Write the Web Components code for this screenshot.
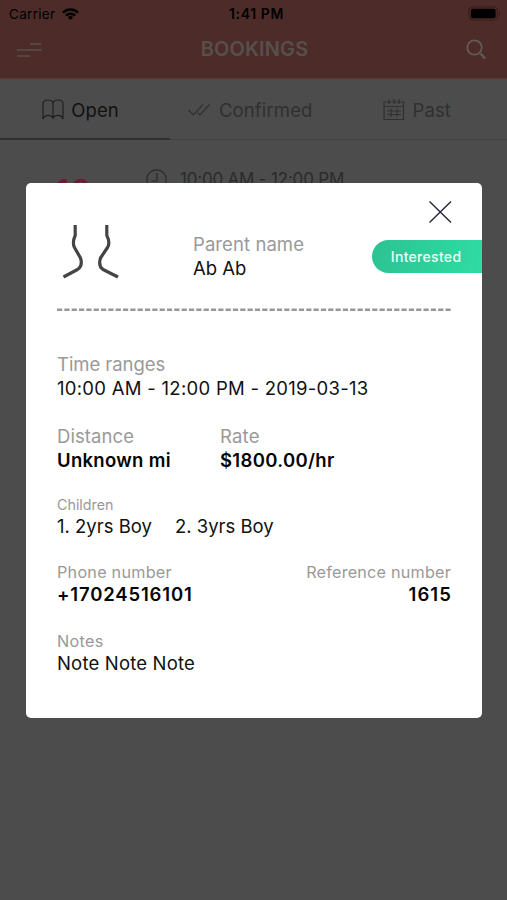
<!DOCTYPE html>
<html lang="en">
<head>
<meta charset="utf-8">
<title>Bookings</title>
<style>
html,body{margin:0;height:100%;overflow:hidden;background:#4c4c4c}
body{font-family:Inter,"Liberation Sans",sans-serif}
</style>
</head>
<body>
<booking-app></booking-app>
<script>
function define(name, html) {
  const t = document.createElement('template');
  t.innerHTML = html;
  customElements.define(name, class extends HTMLElement {
    constructor() {
      super();
      this.attachShadow({mode: 'open'}).append(t.content.cloneNode(true));
    }
  });
}

define('status-bar', `
<style>
:host{display:grid;grid-template-columns:1fr auto 1fr;align-items:center;height:28px;padding:0 6px 0 9px;font-size:13.5px;line-height:28px;color:#000}
.l{display:flex;align-items:center;gap:7px}
.l span{letter-spacing:.3px}
.c{font-weight:600;font-size:14px;letter-spacing:.6px;margin-left:3px}
.r{justify-self:end;margin-bottom:1px}
svg{display:block}
</style>
<div class="l"><span>Carrier</span>
<svg width="17" height="12" viewBox="0 0 17 12" style="margin-bottom:1px"><g fill="none" stroke="#000" stroke-width="2.4"><path d="M1 4.6a10.7 10.7 0 0 1 15 0"/><path d="M3.9 7.6a6.6 6.6 0 0 1 9.2 0"/></g><path d="M8.5 12 5.9 9.3a3.8 3.8 0 0 1 5.2 0z"/></svg></div>
<div class="c">1:41 PM</div>
<svg class="r" width="33" height="15" viewBox="0 0 33 15"><rect x="1" y="1" width="28.5" height="13" rx="4" fill="none" stroke="#3a1a1c" stroke-width="1.2"/><rect x="2.9" y="2.8" width="24.7" height="9.4" rx="2" fill="#000"/><path d="M31 5.2q2 2.3 0 4.6z" fill="#3a1a1c"/></svg>`);

define('nav-bar', `
<style>
:host{display:grid;grid-template-columns:1fr auto 1fr;align-items:center;height:50px;padding:0 20px 7px 17px;box-sizing:border-box;color:#56504d}
h1{margin:0 0 0 5px;font-size:20px;font-weight:600;letter-spacing:.12px;line-height:43px}
svg{display:block}
.search{justify-self:end;color:#625b58}
</style>
<svg class="menu" width="26" height="16" viewBox="0 0 26 16" stroke="currentColor" stroke-width="1.4"><path d="M13 2h11.500M0 8h25M0 14h13"/></svg>
<h1>BOOKINGS</h1>
<svg class="search" width="21" height="21" viewBox="0 0 21 21" fill="none" stroke="currentColor"><circle cx="8.500" cy="8.5" r="7.2" stroke-width="1.8"/><path d="m14.500 14.500 4.500 5" stroke-width="2.2"/></svg>`);

define('tab-item', `
<style>
:host{flex:1;display:flex;align-items:center;justify-content:center;gap:7px;height:100%;box-sizing:border-box;padding-top:1px;border-bottom:1px solid #414141;color:#303030;font-size:18.5px;letter-spacing:.14px;line-height:24px}
:host([active]){color:#111;padding-top:2px;border-bottom:2px solid #303030}
</style>
<slot name="icon"></slot><span><slot></slot></span>`);

define('tab-bar', `
<style>
:host{display:flex;align-items:flex-start;height:62px;border-top:1px solid #5a3630;box-sizing:border-box}
svg{display:block}
</style>
<tab-item active style="flex:0 0 170px;padding-right:9px"><svg slot="icon" width="22" height="22" viewBox="0 0 22 22" fill="none" stroke="#202020" stroke-width="1.2"><path d="M11 18.500V4.500C10.500-.2 1.500-.2 1 4.500V20C3 15.300 9 15.300 11 19 13 15.300 19 15.300 21 20V4.500C20.500-.2 11.500-.2 11 4.500"/></svg>Open</tab-item>
<tab-item style="padding-right:8px"><svg slot="icon" width="24" height="14" viewBox="0 0 24 14" fill="none" stroke="currentColor" stroke-width="1.2" style="margin-right:1px"><path d="m1.500 7 5 5L16 1.500M11 10l2 2L22.500 1.500"/></svg>Confirmed</tab-item>
<tab-item style="padding-right:10px"><svg slot="icon" width="22" height="22" viewBox="0 0 22 22" fill="none" stroke="currentColor" stroke-width="1.2"><path d="M1 3h19.500v17.500H1zM1 7.500h19.500M6 0v5M11 0v5M16 0v5M8 9.500v8.500M14 9.500v8.500M4 12h14M4 15.500h14"/></svg>Past</tab-item>`);

define('booking-row', `
<style>
:host{display:flex;align-items:flex-start;padding:28px 0 0 56px;height:90px;box-sizing:border-box;overflow:hidden}
.day{font-size:31px;line-height:36px;font-weight:600;color:#701a30;width:90px;padding-top:5px;letter-spacing:2px}
.time{display:flex;gap:13px;align-items:center;color:#2b2b2b;font-size:17px;line-height:22px;letter-spacing:-.2px}
svg{display:block}
</style>
<div class="day">13</div>
<div class="time"><svg width="21" height="21" viewBox="0 0 21 21" fill="none" stroke="currentColor" stroke-width="1.2"><circle cx="10.5" cy="10.5" r="9.7"/><path d="M11 4v8H5.500"/></svg><span>10:00 AM - 12:00 PM</span></div>`);

define('info-field', `
<style>
:host{display:block;font-size:18.5px;line-height:24px;color:#111;white-space:nowrap}
.label{color:#999;font-size:var(--ls,18.5px);line-height:var(--lh,24px);letter-spacing:var(--lt,.08px)}
.value{letter-spacing:var(--vt,0)}
:host([strong]) .value{font-weight:600;color:#050505}
</style>
<div class="label"><slot name="label"></slot></div><div class="value"><slot></slot></div>`);

define('status-badge', `
<style>
:host{display:block;width:109.5px;height:33px;box-sizing:border-box;padding-left:18.5px;border-radius:17px 0 0 17px;background:linear-gradient(100deg,#2dc291,#2fdca3);color:#ecfff7;font-size:14px;font-weight:500;letter-spacing:.3px;line-height:33px}
</style><slot></slot>`);

define('booking-dialog', `
<style>
:host{position:absolute;left:26px;top:183px;width:455.5px;height:534.8px;box-sizing:border-box;background:#fff;border-radius:5px;padding:18px 0 0 31px;overflow:hidden}
svg{display:block}
.close{margin-left:371.5px}
.head{display:flex;align-items:flex-start;height:74px;margin-top:9px}
.avatar{margin:-9px 72px 0 5px;flex:none}
.name{width:180px}
status-badge{margin-top:8px}
.body{display:flex;flex-direction:column;margin-top:41px;width:394px}
.two{display:flex}
</style>
<svg class="close" width="23" height="22" viewBox="0 0 23 22" stroke="#25253c" stroke-width="1.4"><path d="M.5.5 22 21.500M22 .5.5 21.500"/></svg>
<div class="head">
<svg class="avatar" width="59" height="56" viewBox="0 0 59 56" fill="none" stroke="#444" stroke-width="3.200" stroke-linejoin="round"><path d="M13.200 2V12.500Q10 19.500 12.500 24.500L18.500 35Q21 43 15.500 46.500L1.500 54"/><path d="M44.800 2V12.500Q48.500 19.500 45.500 24.500L38.500 35Q36 43 41 46.500L56 54"/></svg>
<info-field class="name"><span slot="label">Parent name</span>Ab Ab</info-field>
<status-badge>Interested</status-badge>
</div>
<svg width="394" height="3" style="margin-top:2px"><path d="M0 1.800h394" stroke="#979797" stroke-width="2.4" stroke-dasharray="5.2 2.13"/></svg>
<div class="body">
<info-field style="--lt:-.05px;--vt:.28px"><span slot="label">Time ranges</span>10:00 AM - 12:00 PM - 2019-03-13</info-field>
<div class="two" style="margin-top:24px">
<info-field strong style="width:163px;--vt:.3px"><span slot="label">Distance</span>Unknown mi</info-field>
<info-field strong style="--lt:.2px;--vt:.33px"><span slot="label">Rate</span>$1800.00/hr</info-field></div>
<info-field style="margin-top:24px;--ls:14.3px;--lh:18px;--lt:0;--vt:0"><span slot="label">Children</span><span>1. 2yrs Boy</span><span style="margin-left:23px">2. 3yrs Boy</span></info-field>
<div class="two" style="margin-top:24px;justify-content:space-between">
<info-field strong style="--ls:16.2px;--lh:20px;--lt:.24px;--vt:.84px"><span slot="label">Phone number</span>+17024516101</info-field>
<info-field strong style="text-align:right;--ls:16.2px;--lh:20px;--lt:.21px;--vt:1.1px"><span slot="label">Reference number</span><span style="margin-right:-1px">1615</span></info-field></div>
<info-field style="margin-top:25px;--ls:16.2px;--lh:20px;--lt:.34px;--vt:.18px"><span slot="label">Notes</span>Note Note Note</info-field>
</div>`);

define('booking-app', `
<style>
:host{display:block;position:relative;width:507px;height:900px;background:#4c4c4c;overflow:hidden}
header{background:#4d2b29}
</style>
<header><status-bar></status-bar><nav-bar></nav-bar></header>
<tab-bar></tab-bar>
<booking-row></booking-row>
<booking-dialog></booking-dialog>`);
</script>
</body>
</html>
